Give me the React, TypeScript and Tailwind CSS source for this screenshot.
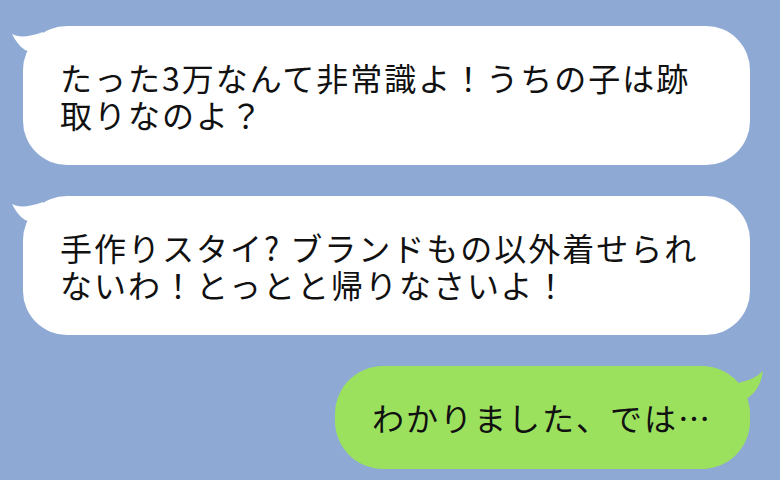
import React from "react"

const font = { fontFamily: '"Noto Sans CJK JP", "Noto Sans", sans-serif' }

const LeftTail: React.FC = () => (
    <svg className="absolute -left-[12px] top-[2px]" width="40" height="36" viewBox="0 0 40 36">
        <path d="M1 6 C8 10 18 9 32 4 L36 30 C30 26 20 24 14 22 C8 18 4 12 1 6 Z" fill="#ffffff" />
    </svg>
)

const RightTail: React.FC = () => (
    <svg className="absolute -right-[14px] top-[2px]" width="40" height="40" viewBox="0 0 40 40">
        <path d="M39 3 C32 10 22 14 8 16 L10 36 C18 34 26 30 32 22 C36 16 38 10 39 3 Z" fill="#9ce15e" />
    </svg>
)

type BubbleProps = { lines: string[] }

const Lines: React.FC<BubbleProps> = ({ lines }) => (
    <p className="text-[32px] leading-[37px] tracking-[2px] whitespace-nowrap text-[#111]">
        {lines.map((line, i) => (
            <React.Fragment key={line}>
                {i > 0 && <br />}
                {line}
            </React.Fragment>
        ))}
    </p>
)

const Incoming: React.FC<BubbleProps> = ({ lines }) => (
    <div className="relative ml-[23px] w-[727px]">
        <LeftTail />
        <div className="relative h-[139px] rounded-[44px] bg-white pl-[37px] flex flex-col justify-center">
            <Lines lines={lines} />
        </div>
    </div>
)

const Outgoing: React.FC<BubbleProps> = ({ lines }) => (
    <div className="relative mr-[30px] self-end w-[415px]">
        <RightTail />
        <div className="relative h-[103px] rounded-[48px] bg-[#9ce15e] pl-[37px] flex flex-col justify-center">
            <Lines lines={lines} />
        </div>
    </div>
)

const App: React.FC = () => {
    return (
        <div style={font} className="w-[780px] h-[480px] overflow-hidden bg-[#8fa9d5] pt-[26px] flex flex-col gap-[31px]">
            <Incoming lines={["たった3万なんて非常識よ！うちの子は跡", "取りなのよ？"]} />
            <Incoming lines={["手作りスタイ? ブランドもの以外着せられ", "ないわ！とっとと帰りなさいよ！"]} />
            <Outgoing lines={["わかりました、では…"]} />
        </div>
    )
}

export default App
